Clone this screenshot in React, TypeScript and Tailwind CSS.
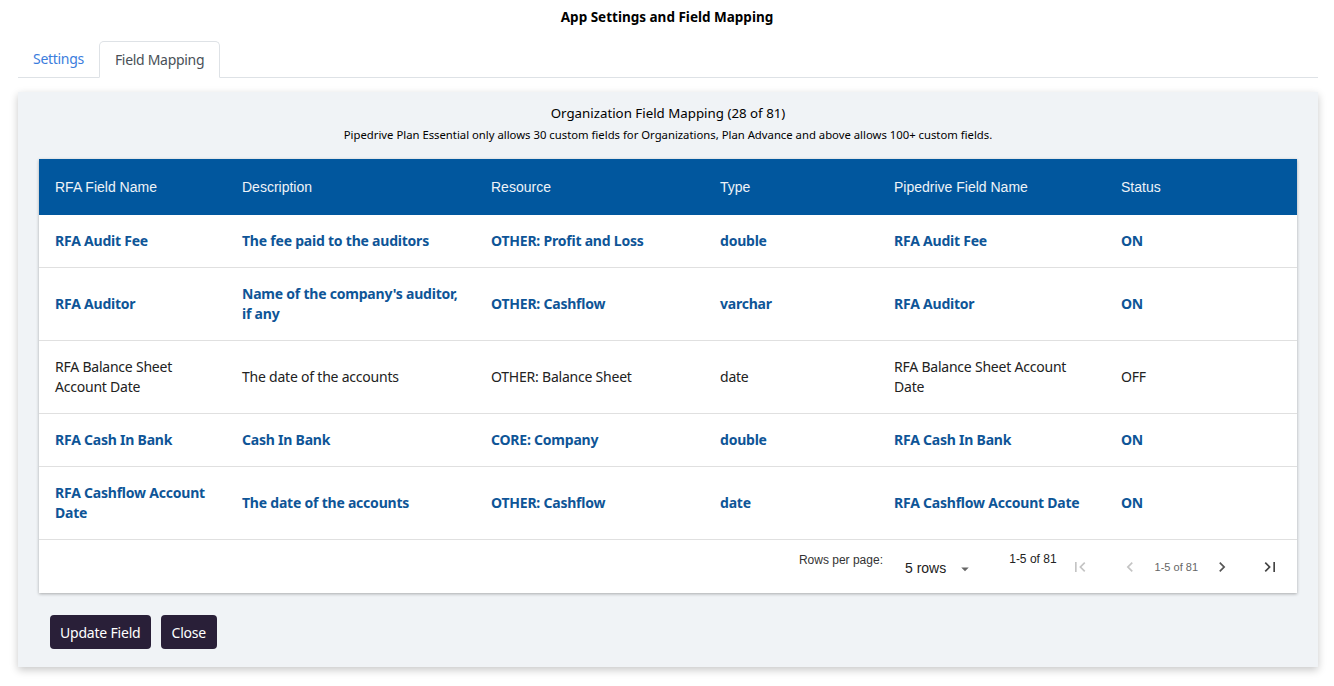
import React from "react";

type Row = {
  name: string;
  desc: string;
  resource: string;
  type: string;
  pipedrive: string;
  status: string;
  active: boolean;
  tall: boolean;
};

const rows: Row[] = [
  { name: "RFA Audit Fee", desc: "The fee paid to the auditors", resource: "OTHER: Profit and Loss", type: "double", pipedrive: "RFA Audit Fee", status: "ON", active: true, tall: false },
  { name: "RFA Auditor", desc: "Name of the company's auditor, if any", resource: "OTHER: Cashflow", type: "varchar", pipedrive: "RFA Auditor", status: "ON", active: true, tall: true },
  { name: "RFA Balance Sheet Account Date", desc: "The date of the accounts", resource: "OTHER: Balance Sheet", type: "date", pipedrive: "RFA Balance Sheet Account Date", status: "OFF", active: false, tall: true },
  { name: "RFA Cash In Bank", desc: "Cash In Bank", resource: "CORE: Company", type: "double", pipedrive: "RFA Cash In Bank", status: "ON", active: true, tall: false },
  { name: "RFA Cashflow Account Date", desc: "The date of the accounts", resource: "OTHER: Cashflow", type: "date", pipedrive: "RFA Cashflow Account Date", status: "ON", active: true, tall: true },
];

const cols = ["w-[187px]", "w-[249px]", "w-[229px]", "w-[174px]", "w-[227px]", "w-[192px]"];
const headers = ["RFA Field Name", "Description", "Resource", "Type", "Pipedrive Field Name", "Status"];

const Chevron = ({ d, className }: { d: string; className: string }) => (
  <svg viewBox="0 0 24 24" className={className} fill="currentColor">
    <path d={d} />
  </svg>
);

export default function App() {
  return (
    <div className="min-h-screen bg-white font-['Noto_Sans',sans-serif] text-[#222]">
      <h1 className="pt-[8px] text-center text-[13.5px] font-bold leading-[18px] text-black">
        App Settings and Field Mapping
      </h1>

      <div className="ml-[18px] mr-[16px] mt-[15px] flex border-b border-[#dee2e6] text-[14px] tracking-[-0.3px]">
        <div className="px-[15px] py-[8px] leading-[19px] text-[#3b7ddd]">Settings</div>
        <div className="-mb-px rounded-t-[5px] border border-b-white border-[#dee2e6] bg-white px-[15px] py-[8px] leading-[19px] text-[#495057]">
          Field Mapping
        </div>
      </div>

      <div className="ml-[18px] mr-[16px] mt-[14px] bg-[#f0f3f6] px-[21px] pb-[18px] pt-[12px] shadow-[0_3px_8px_rgba(0,0,0,0.22)]">
        <div className="text-center text-[13.3px] leading-[18px] text-black">
          Organization Field Mapping (28 of 81)
        </div>
        <div className="mt-[5px] text-center text-[11.3px] leading-[15px] text-black">
          Pipedrive Plan Essential only allows 30 custom fields for Organizations, Plan Advance and above allows 100+ custom fields.
        </div>

        <div className="mt-[17px] bg-white shadow-[0_1px_3px_rgba(0,0,0,0.3)]">
          <div className="flex h-[56px] items-center bg-[#01579e] font-['Liberation_Sans',sans-serif] text-[14px] text-[#eef3f8]">
            {headers.map((h, i) => (
              <div key={h} className={`${cols[i]} px-[16px]`}>
                {h}
              </div>
            ))}
          </div>
          {rows.map((r) => (
            <div
              key={r.name}
              className={`flex items-center border-b border-[#e0e0e0] text-[14px] leading-[20px] tracking-[-0.22px] ${
                r.tall ? "min-h-[73px]" : "min-h-[53px]"
              } ${r.active ? "font-bold text-[#0e5597]" : "text-[#222]"}`}
            >
              {[r.name, r.desc, r.resource, r.type, r.pipedrive, r.status].map((c, i) => (
                <div key={i} className={`${cols[i]} px-[16px]`}>
                  {c}
                </div>
              ))}
            </div>
          ))}
          <div className="flex h-[53px] items-start justify-end font-['Liberation_Sans',sans-serif] text-[#333]">
            <span className="mt-[11px] text-[12px]">Rows per page:</span>
            <div className="ml-[22px] mt-[18px] flex items-center text-[14px] text-[#222]">
              5 rows
              <svg viewBox="0 0 24 24" className="ml-[10px] h-[18px] w-[18px] text-[#666]" fill="currentColor">
                <path d="M7 10l5 5 5-5z" />
              </svg>
            </div>
            <span className="ml-[35px] mt-[10px] text-[12px] text-[#222]">1-5 of 81</span>
            <Chevron
              d="M18.41 16.59L13.82 12l4.59-4.59L17 6l-6 6 6 6zM6 6h2v12H6z"
              className="ml-[13px] mt-[17px] h-[20px] w-[20px] text-[#c4c4c4]"
            />
            <Chevron
              d="M15.41 7.41L14 6l-6 6 6 6 1.41-1.41L10.83 12z"
              className="ml-[30px] mt-[17px] h-[20px] w-[20px] text-[#c4c4c4]"
            />
            <span className="ml-[15px] mt-[19px] text-[11px] text-[#666]">1-5 of 81</span>
            <Chevron
              d="M10 6L8.59 7.41 13.17 12l-4.58 4.59L10 18l6-6z"
              className="ml-[14px] mt-[17px] h-[20px] w-[20px] text-[#555]"
            />
            <Chevron
              d="M5.59 7.41L10.18 12l-4.59 4.59L7 18l6-6-6-6zM16 6h2v12h-2z"
              className="ml-[28px] mr-[17px] mt-[17px] h-[20px] w-[20px] text-[#444]"
            />
          </div>
        </div>

        <div className="mt-[22px] flex gap-[10px] px-[11px]">
          <button className="h-[34px] rounded-[4px] bg-[#291f38] px-[10px] text-[14px] tracking-[-0.2px] text-white">
            Update Field
          </button>
          <button className="h-[34px] rounded-[4px] bg-[#291f38] px-[11px] text-[14px] tracking-[-0.2px] text-white">
            Close
          </button>
        </div>
      </div>
    </div>
  );
}
